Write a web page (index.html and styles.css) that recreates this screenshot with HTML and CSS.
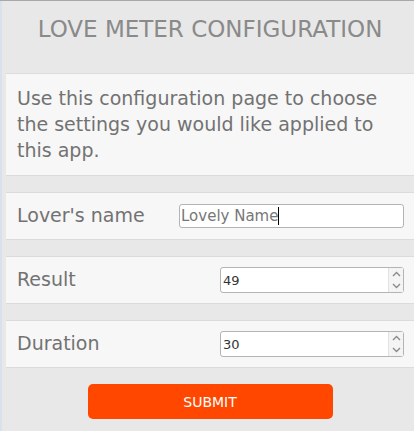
FILE: index.html
```html
<!DOCTYPE html>
<html>
<head>
<meta charset="utf-8">
<link rel="stylesheet" href="styles.css">
</head>
<body>
<div class="page">
  <header class="title">Love Meter Configuration</header>
  <section class="panel desc">
    <p>Use this configuration page to choose the settings you would like applied to this app.</p>
  </section>
  <section class="panel row">
    <label class="label" for="name">Lover's name</label>
    <div class="text-input" id="name"><span class="text-value">Lovely Name</span><span class="caret"></span></div>
  </section>
  <section class="panel row">
    <span class="label">Result</span>
    <div class="num-input">
      <span class="num-value">49</span>
      <span class="spin">
        <svg class="arrow" width="9" height="6" viewBox="0 0 9 6"><path d="M1 5 L4.5 1.5 L8 5" fill="none" stroke="#8a8a8a" stroke-width="1.4"/></svg>
        <svg class="arrow" width="9" height="6" viewBox="0 0 9 6"><path d="M1 1 L4.5 4.5 L8 1" fill="none" stroke="#8a8a8a" stroke-width="1.4"/></svg>
      </span>
    </div>
  </section>
  <section class="panel row">
    <span class="label">Duration</span>
    <div class="num-input">
      <span class="num-value">30</span>
      <span class="spin">
        <svg class="arrow" width="9" height="6" viewBox="0 0 9 6"><path d="M1 5 L4.5 1.5 L8 5" fill="none" stroke="#8a8a8a" stroke-width="1.4"/></svg>
        <svg class="arrow" width="9" height="6" viewBox="0 0 9 6"><path d="M1 1 L4.5 4.5 L8 1" fill="none" stroke="#8a8a8a" stroke-width="1.4"/></svg>
      </span>
    </div>
  </section>
  <div class="actions">
    <button class="submit" type="button">Submit</button>
  </div>
</div>
</body>
</html>
```
FILE: styles.css
```css
html, body {
  margin: 0;
  padding: 0;
}
body {
  background: #e8e8e8;
  font-family: "DejaVu Sans", sans-serif;
  border-top: 1px solid #a8a8a8;
  min-height: 430px;
}
.page {
  border-left: 2px solid #d9e2ec;
  padding-left: 4px;
  min-height: 430px;
  box-sizing: border-box;
}
.title {
  height: 72px;
  box-sizing: border-box;
  padding-top: 14px;
  text-align: center;
  font-size: 23px;
  line-height: 28px;
  color: #8a8a8a;
  text-transform: uppercase;
}
.panel {
  background: #f7f7f7;
  border-top: 1px solid #dcdcdc;
  border-bottom: 1px solid #dcdcdc;
}
.desc {
  padding: 11px 11px 12px;
}
.desc p {
  margin: 0;
  font-size: 19px;
  line-height: 26px;
  color: #727272;
}
.row {
  margin-top: 16px;
  height: 46px;
  display: flex;
  align-items: center;
  justify-content: space-between;
  padding: 0 10px 0 11px;
}
.label {
  font-size: 19px;
  line-height: 22px;
  padding-bottom: 2px;
  color: #727272;
}
.text-input {
  width: 225px;
  height: 24px;
  box-sizing: border-box;
  border: 1px solid #b4b4b4;
  border-radius: 3px;
  background: #fff;
  padding: 0 1px;
  display: flex;
  align-items: center;
}
.text-value {
  font-size: 15px;
  color: #777;
}
.caret {
  width: 1px;
  height: 18px;
  background: #000;
}
.num-input {
  width: 184px;
  height: 26px;
  box-sizing: border-box;
  border: 1px solid #b4b4b4;
  border-radius: 3px;
  background: #fff;
  display: flex;
  align-items: center;
  justify-content: space-between;
  padding-left: 2px;
}
.num-value {
  font-size: 13px;
  color: #333;
}
.spin {
  width: 14px;
  height: 24px;
  display: flex;
  flex-direction: column;
  align-items: center;
  justify-content: space-around;
  background: #f4f4f4;
  border-left: 1px solid #e2e2e2;
}
.arrow {
  display: block;
}
.actions {
  display: flex;
  justify-content: center;
  padding-top: 16px;
}
.submit {
  width: 245px;
  height: 35px;
  border: none;
  border-radius: 5px;
  background: #ff4700;
  color: #fff;
  font-family: "DejaVu Sans", sans-serif;
  font-size: 14px;
  text-transform: uppercase;
}
```
